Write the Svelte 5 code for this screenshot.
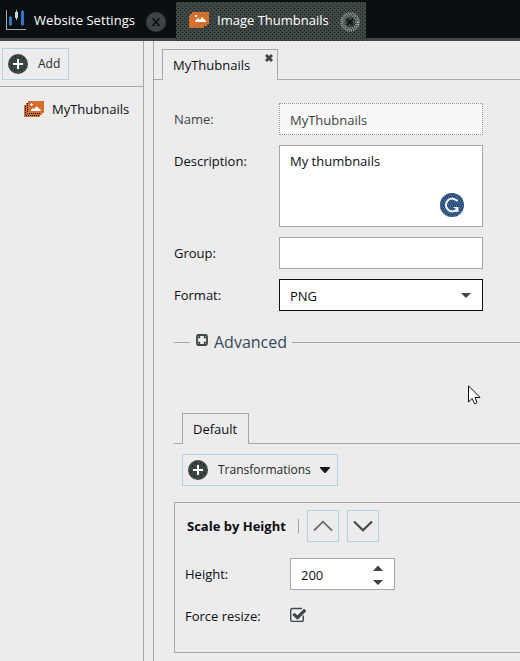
<script>
  let height = $state(200);
  const fields = [
    { label: 'Name:', value: 'MyThubnails', kind: 'readonly' },
    { label: 'Description:', value: 'My thumbnails', kind: 'area' },
    { label: 'Group:', value: '', kind: 'text' },
    { label: 'Format:', value: 'PNG', kind: 'select' }
  ];
</script>

{#snippet plus()}
  <svg class="plus" width="20" height="20" viewBox="0 0 20 20">
    <circle cx="10" cy="10" r="10" fill="#3b4543" />
    <path d="M5 10H15M10 5V15" stroke="#fff" stroke-width="2" />
    <path d="M4 6h1M15 5h1M3 12h1M16 13h1M6 16h1M13 16h1M7 3h1M12 3h1" stroke="#0b0f12" />
  </svg>
{/snippet}

<div class="app">
  <header>
    <div class="top first">
      <svg width="20" height="20" viewBox="0 0 20 20" shape-rendering="crispEdges">
        <path d="M.5 0V19.5H20" fill="none" stroke="#a9aaaa" />
        <path d="M4.5 6V16M16.5 0V16" stroke="#2f6db8" />
        <path d="M4.5 7V15M16.5 1V15" stroke="#2f75c8" stroke-width="3" />
        <path d="M10.5 0V10" stroke="#a8cbd5" />
        <path d="M10.5 2V8" stroke="#b6d7e2" stroke-width="3" />
      </svg>
      <span>Website Settings</span>
      <svg class="x" width="20" height="20" viewBox="0 0 20 20">
        <circle cx="10" cy="10" r="10" fill="#3b4543" />
        <path d="M7 7L13 13M13 7L7 13" stroke="#0b0f12" stroke-width="1.5" />
        <path d="M6 7h3M11 7h3M6 13.5h3M11 13.5h3" stroke="#0b0f12" stroke-width=".8" />
      </svg>
    </div>
    <div class="top active">
      <svg width="20" height="16" viewBox="0 0 20 16">
        <path d="M3 0H20V12H18V14H15V16H0V4H1V2H3Z" fill="#d3702e" />
        <path d="M6 10V9L9 6L11 8L13 5L15 7L17 9V10Z" fill="#fff" />
        <path d="M6 3H8V5H6Z" fill="#fff" />
      </svg>
      <span>Image Thumbnails</span>
      <svg class="x" width="20" height="20" viewBox="0 0 20 20">
        <circle cx="10" cy="10" r="9" fill="none" stroke="#c3c8c7" stroke-width="1.2" stroke-dasharray="1 1" />
        <circle cx="10" cy="10" r="7.5" fill="none" stroke="#b6bcbb" stroke-width="1.1" stroke-dasharray="1 1" />
        <circle cx="10" cy="10" r="6" fill="none" stroke="#9da4a3" stroke-width="1.1" stroke-dasharray="1 1" />
        <path d="M7 7L13 13M13 7L7 13" stroke="#0b0f12" stroke-width="1.6" />
      </svg>
    </div>
  </header>

  <div class="body">
    <aside>
      <div class="tools">
        <button class="btn add">{@render plus()}<span>Add</span></button>
      </div>
      <div class="item">
        <svg width="20" height="16" viewBox="0 0 20 16">
          <path d="M4 0H20V12H18V14H16V16H0V4H2V2H4Z" fill="#d3702e" />
          <path d="M3.5 2V12.5H17M1.5 5V14.5H15" fill="none" stroke="#0b0f12" stroke-dasharray="1 1" />
          <path d="M7 10V9L9 7L10 8L13 5L14 7L16 8L17 10Z" fill="#fff" />
          <path d="M7 2H8V3H9V4H8V5H7V4H6V3H7Z" fill="#fff" />
        </svg>
        <span>MyThubnails</span>
      </div>
    </aside>

    <main>
      <div class="tabs doc">
        <div class="tab">
          <span>MyThubnails</span>
          <svg width="8" height="8" viewBox="0 0 8 8"><path d="M1 1L7 7M7 1L1 7" stroke="#3b4543" stroke-width="2.8" /></svg>
        </div>
      </div>

      <div class="content">
        {#each fields as f}
          <div class="row">
            <span class="label" class:dim={f.kind === 'readonly'}>{f.label}</span>
            <div class="field {f.kind}">
              <span>{f.value}</span>
              {#if f.kind === 'area'}
                <svg class="gram" width="24" height="24" viewBox="0 0 24 24">
                  <defs>
                    <pattern id="dots" width="4" height="4" patternUnits="userSpaceOnUse">
                      <path d="M0 0h1v1H0zM2 0h1v1H2zM1 2h1v1H1zM3 2h1v1H3zM0 3h1v1H0zM2 1h1v1H2z" fill="#2f75c8" />
                    </pattern>
                  </defs>
                  <circle cx="12" cy="12" r="12" fill="#36485a" />
                  <circle cx="12" cy="12" r="12" fill="url(#dots)" />
                  <path d="M17.5 8.2A6.4 6.4 0 1 0 17.5 15.8" fill="none" stroke="#f2f8fa" stroke-width="2" />
                  <path d="M13 14H18.5V19H16.5L16 16Z" fill="#f2f8fa" />
                </svg>
              {:else if f.kind === 'select'}
                <svg width="10" height="5" viewBox="0 0 10 5"><path d="M0 0H10L5 5Z" fill="#3b4543" /></svg>
              {/if}
            </div>
          </div>
        {/each}

        <div class="legend">
          <i class="short"></i>
          <svg width="12" height="12" viewBox="0 0 12 12">
            <rect x="1" y="1" width="10" height="10" rx="1.5" fill="#ececec" stroke="#3b4543" stroke-width="1.8" />
            <path d="M2 3.5H3.5V2M8.5 2V3.5H10M2 8.5H3.5V10M8.5 10V8.5H10" fill="none" stroke="#3b4543" stroke-width="1.4" />
          </svg>
          <span>Advanced</span>
          <i class="long"></i>
        </div>

        <div class="tabs inner"><div class="tab"><span>Default</span></div></div>

        <button class="btn trans">
          {@render plus()}
          <span>Transformations</span>
          <svg width="10" height="6" viewBox="0 0 10 6"><path d="M0 0H10V1L5.5 6H4.5L0 1Z" fill="#11171a" /></svg>
        </button>

        <section>
          <div class="head">
            <b>Scale by Height</b>
            <i></i>
            <button class="btn sq"><svg width="20" height="12" viewBox="0 0 20 12"><path d="M1 10.5L10 1.7L19 10.5" fill="none" stroke="#3b4543" stroke-opacity=".75" stroke-width="1.8" /></svg></button>
            <button class="btn sq"><svg width="20" height="12" viewBox="0 0 20 12"><path d="M1 1.5L10 10.3L19 1.5" fill="none" stroke="#3b4543" stroke-width="2" /></svg></button>
          </div>
          <div class="opt">
            <span class="label">Height:</span>
            <div class="number">
              <span>{height}</span>
              <svg width="10" height="20" viewBox="0 0 10 20"><path d="M0 6L5 .5L10 6ZM0 15H10L5 20Z" fill="#3b4543" /></svg>
            </div>
          </div>
          <div class="opt force">
            <span class="label">Force resize:</span>
            <svg width="17" height="16" viewBox="0 0 17 16">
              <path d="M13.3 8.5V12.5Q13.3 14.4 11.5 14.4H2.6Q.7 14.4 .7 12.5V3.4Q.7 1.5 2.6 1.5H12" fill="none" stroke="#3b4a50" stroke-width="1.4" />
              <path d="M3.4 6.8L7.5 10.6L15.2 2.8" fill="none" stroke="#3b4543" stroke-width="3.2" />
            </svg>
          </div>
        </section>
      </div>
    </main>
  </div>

  <svg class="cursor" width="13" height="20" viewBox="0 0 13 20">
    <path d="M.5 .8V17L4.2 13.5L6.5 18.7Q8 19 9 17.5L7 12.5H12Z" fill="#fff" stroke="#0b0f12" />
  </svg>
</div>

<style>
  :global(body) { margin: 0; }
  .app, .app * { box-sizing: border-box; }
  .app {
    position: relative;
    width: 520px;
    height: 661px;
    overflow: hidden;
    display: flex;
    flex-direction: column;
    background: #ececec;
    color: #0b0f12;
    font: 13px/18px "Open Sans", "Noto Sans", sans-serif;
    white-space: nowrap;
  }
  svg { display: block; flex: none; }
  header {
    height: 41px;
    flex: none;
    display: flex;
    align-items: flex-end;
    background: #0b0f12;
    border-bottom: 3px solid #3f4845;
    color: #fff;
  }
  .top { display: flex; height: 36px; position: relative; }
  .first { width: 176px; padding-left: 6px; }
  .first svg:first-child { margin-top: 8px; }
  .top span { margin-top: 9px; }
  .first span { margin-left: 8px; width: 112px; letter-spacing: .05px; }
  .x { margin-top: 10px; }
  .active {
    width: 190px;
    height: 39px;
    margin-bottom: -3px;
    padding-left: 13px;
    background:
      conic-gradient(from 0deg at 1px 1px, transparent 75%, #151b1c 0) 0 0 / 4px 4px,
      conic-gradient(from 0deg at 1px 1px, transparent 75%, #151b1c 0) 2px 2px / 4px 4px,
      #3f4845;
  }
  .active svg:first-child { margin-top: 10px; }
  .active span { margin-left: 8px; width: 123px; }
  .body { flex: 1; display: flex; min-height: 0; }
  aside { width: 144px; border-right: 1px solid #a7a8a6; flex: none; }
  .tools { height: 46px; padding: 7px 2px; border-bottom: 1px solid #a7a8a6; }
  .btn {
    display: flex;
    align-items: center;
    height: 32px;
    padding: 0 5px;
    margin: 0;
    border: 1px solid #b4d3dc;
    background: none;
    color: #222a2a;
    font: 12px/18px "Open Sans", "Noto Sans", sans-serif;
  }
  .add { width: 67px; }
  .add span { margin-left: 10px; }
  .item { display: flex; margin: 13px 0 0 24px; }
  .item svg { margin-top: 1px; }
  .item span { margin-left: 8px; }
  main { flex: 1; min-width: 0; margin-left: 9px; border-left: 1px solid #a7a8a6; }
  .tabs { display: flex; }
  .tabs::before, .tabs::after { content: ''; border-bottom: 1px solid #a7a8a6; width: 8px; flex: none; }
  .tabs::after { flex: 1; }
  .tab { display: flex; border: 1px solid #a7a8a6; border-bottom: 0; }
  .doc { height: 31px; margin-top: 8px; }
  .doc .tab { width: 116px; padding: 6px 0 0 10px; }
  .doc .tab span { width: 92px; }
  .doc .tab svg { margin-top: -2px; }
  .content { padding-left: 20px; margin-top: 23px; }
  .row { display: flex; margin-bottom: 10px; }
  .label { width: 105px; flex: none; padding-top: 7px; }
  .dim { color: #3b4543; }
  .field {
    width: 204px;
    height: 32px;
    padding: 7px 10px 0;
    background: #fff;
    border: 1px solid #a7a8a6;
    position: relative;
  }
  .field.readonly {
    color: #3b4543;
    border: 1px dotted #8f9d9d;
    background: #f8f8f8;
  }
  .field.area { height: 82px; padding-top: 6px; }
  .gram { position: absolute; left: 160px; top: 47px; }
  .field.select { display: flex; justify-content: space-between; border-color: #0b0f12; }
  .field.select svg { margin: 6px 1px 0 0; }
  .legend { display: flex; align-items: center; height: 24px; margin-top: 19px; font-size: 16px; color: #34495a; }
  .legend i { height: 1px; background: #a7a8a6; }
  .short { width: 16px; margin-right: 6px; }
  .legend svg { margin: -4px 6px 0 0; }
  .long { flex: 1; margin-left: 5px; }
  .inner { height: 31px; margin-top: 59px; }
  .inner .tab { width: 67px; padding: 6px 0 0 10px; }
  .trans { width: 156px; margin: 10px 0 0 8px; }
  .trans span { margin-left: 10px; width: 102px; text-align: left; }
  section { height: 151px; margin-top: 16px; padding: 7px 0 0 10px; border: 1px solid #a7a8a6; border-right: 0; }
  .head { display: flex; align-items: center; }
  .head b { width: 111px; margin-left: 2px; }
  .head i { width: 1px; height: 14px; background: #a7a8a6; }
  .sq { width: 32px; justify-content: center; padding: 0; margin-left: 8px; }
  .opt { display: flex; margin-top: 16px; }
  .number {
    width: 105px;
    height: 32px;
    display: flex;
    justify-content: space-between;
    padding: 7px 11px 0 10px;
    background: #fff;
    border: 1px solid #a7a8a6;
  }
  .number svg { margin-top: -1px; }
  .force { margin-top: 10px; }
  .force svg { margin-top: 7px; }
  .cursor { position: absolute; left: 468px; top: 385px; }
</style>
